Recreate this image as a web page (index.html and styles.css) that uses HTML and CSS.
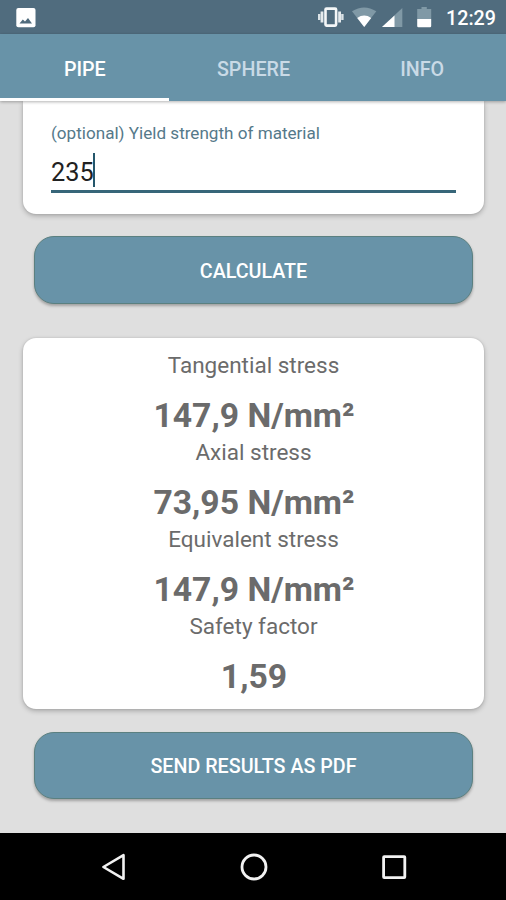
FILE: index.html
```html
<!DOCTYPE html>
<html lang="en">
<head>
  <meta charset="UTF-8">
  <title>Pipe</title>
  <link rel="stylesheet" href="styles.css">
</head>
<body>

<div class="status-bar">
  <svg class="photo-icon" width="20" height="20" viewBox="0 0 20 20">
    <rect x="0.3" y="0" width="19.2" height="19.3" rx="2" fill="#fff"/>
    <path d="M3.5 15.5 L6.8 11.5 L9 13.6 L12 10 L16 15.5 Z" fill="#4f6b7c"/>
  </svg>
  <svg class="system-icons" width="120" height="22" viewBox="0 0 120 22">
    <!-- vibrate -->
    <rect x="8.5" y="2.6" width="10.6" height="17" rx="1" fill="none" stroke="#f4f7f8" stroke-width="2.6"/>
    <path d="M5 5.5V16.5M22.6 5.5V16.5" stroke="#e4eaed" stroke-width="2.8"/>
    <path d="M2.2 8V14M25.4 8V14" stroke="#dbe3e7" stroke-width="2.4"/>
    <!-- wifi -->
    <path d="M35 5.3 Q47 -2.3 59.3 5.3 L47.2 21 Z" fill="#8099a6"/>
    <path d="M40.2 12 Q47.2 7.2 54.2 12 L47.2 21 Z" fill="#fff"/>
    <!-- signal -->
    <path d="M85.3 2 V21 H65 Z" fill="#8099a6"/>
    <path d="M77.5 9.4 V21 H65 Z" fill="#fff"/>
    <!-- battery -->
    <path d="M104.5 1 H109.8 V3 H114.2 V13 H100.2 V3 H104.5 Z" fill="#8099a6"/>
    <path d="M100.2 13 H114.2 V20 Q114.2 21.3 113 21.3 H101.4 Q100.2 21.3 100.2 20 Z" fill="#fff"/>
  </svg>
  <span class="clock">12:29</span>
</div>

<div class="tabs">
  <div class="tab active">PIPE</div>
  <div class="tab">SPHERE</div>
  <div class="tab">INFO</div>
</div>

<div class="content">
  <div class="card form-card">
    <div class="field-label">(optional) Yield strength of material</div>
    <div class="field"><span class="field-value">235</span><span class="cursor"></span></div>
  </div>

  <button class="calculate">CALCULATE</button>

  <div class="card results">
    <div class="result-label">Tangential stress</div>
    <div class="result-value">147,9 N/mm²</div>
    <div class="result-label">Axial stress</div>
    <div class="result-value">73,95 N/mm²</div>
    <div class="result-label">Equivalent stress</div>
    <div class="result-value">147,9 N/mm²</div>
    <div class="result-label">Safety factor</div>
    <div class="result-value">1,59</div>
  </div>

  <button class="send">SEND RESULTS AS PDF</button>
</div>

<div class="nav-bar">
  <svg width="28" height="30" viewBox="0 0 28 30">
    <path d="M3.4 15 L23.5 3.2 V26.8 Z" fill="none" stroke="#f2f2f2" stroke-width="2.6" stroke-linejoin="round"/>
  </svg>
  <svg width="28" height="30" viewBox="0 0 28 30">
    <circle cx="14" cy="15" r="12" fill="none" stroke="#f2f2f2" stroke-width="2.8"/>
  </svg>
  <svg width="28" height="30" viewBox="0 0 28 30">
    <rect x="3.6" y="4.6" width="21.2" height="21" rx="0.6" fill="none" stroke="#f2f2f2" stroke-width="2.8"/>
  </svg>
</div>

</body>
</html>
```
FILE: styles.css
```css
* {
  box-sizing: border-box;
}
body {
  font-family: Roboto, "Liberation Sans", sans-serif;
  background-color: #dfdfdf;
  margin: 0;
  height: 900px;
  display: flex;
  flex-direction: column;
  overflow: hidden;
}
.status-bar {
  height: 34px;
  flex: none;
  display: flex;
  align-items: center;
  padding: 0 11px 0 16px;
  background-color: #506c7e;
}
.photo-icon {
  margin-top: 1px;
}
.system-icons {
  margin-left: auto;
}
.clock {
  width: 49px;
  margin-left: 9px;
  margin-top: 2px;
  color: #fff;
  font-size: 19.7px;
  font-weight: 500;
  white-space: nowrap;
}
.tabs {
  height: 67px;
  flex: none;
  display: grid;
  grid-template-columns: repeat(3, 1fr);
  background-color: #6893a8;
  box-shadow: 0 1px 3px rgba(0,0,0,0.3);
  z-index: 1;
}
.tab {
  padding: 7px 0 0 1px;
  border-bottom: 3px solid transparent;
  display: flex;
  justify-content: center;
  align-items: center;
  color: #c9dae6;
  font-size: 19.7px;
  font-weight: 500;
}
.tab.active {
  color: #fff;
  border-bottom-color: #fff;
}
.content {
  flex: 1;
  padding: 0 22px 0 23px;
  display: flex;
  flex-direction: column;
}
.card {
  background-color: #fff;
  border-radius: 13px;
  box-shadow: 0 2px 5px rgba(0,0,0,0.25), 0 0 2px rgba(0,0,0,0.12);
}
.form-card {
  height: 113px;
  padding: 21px 28px 0;
  border-radius: 0 0 13px 13px;
}
.field-label {
  color: #55798a;
  font-size: 17.1px;
  line-height: 22px;
}
.field {
  height: 49px;
  padding-top: 9px;
  display: flex;
  border-bottom: 3px solid #376679;
}
.field-value {
  padding-top: 1px;
  color: #212121;
  font-size: 25.3px;
  line-height: 37px;
}
.cursor {
  width: 2px;
  height: 34px;
  margin-left: -1px;
  background-color: #24566b;
}
button {
  height: 68px;
  margin: 0 11px;
  padding: 2px 0 0;
  background-color: #6893a8;
  color: #fff;
  border: 1px solid #5b8080;
  border-radius: 20px;
  box-shadow: 0 2px 3px rgba(0,0,0,0.28);
  font-family: inherit;
  font-size: 19.7px;
  font-weight: 500;
}
.calculate {
  margin-top: 22px;
}
.results {
  height: 371px;
  margin-top: 34px;
  padding-top: 12px;
  color: #6b6b6b;
  text-align: center;
}
.result-label {
  font-size: 22.5px;
  line-height: 30px;
}
.result-value {
  padding: 15px 0 0 1px;
  font-size: 33.7px;
  font-weight: bold;
  line-height: 42.1px;
}
.send {
  height: 67px;
  margin-top: 23px;
}
.nav-bar {
  height: 67px;
  flex: none;
  display: flex;
  justify-content: center;
  align-items: center;
  gap: 112px;
  padding-left: 1px;
  background-color: #000;
}
```
